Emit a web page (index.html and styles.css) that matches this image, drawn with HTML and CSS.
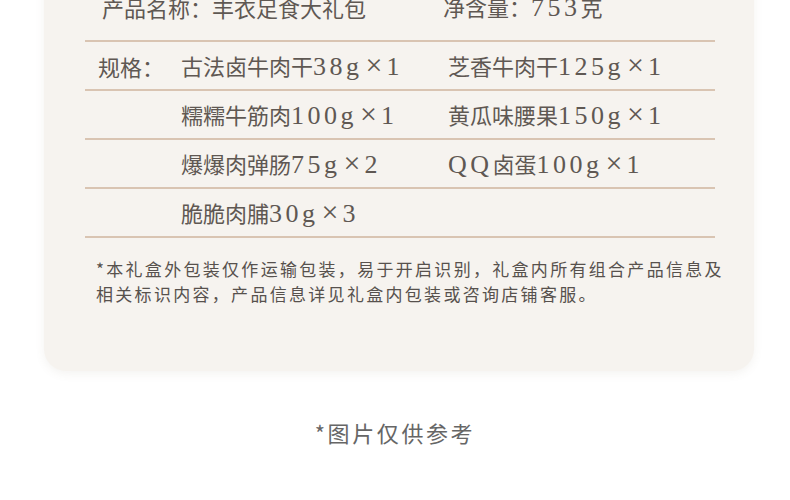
FILE: index.html
```html
<!DOCTYPE html>
<html lang="zh-CN">
<head>
<meta charset="utf-8">
<title>产品信息</title>
<link rel="stylesheet" href="styles.css">
</head>
<body>
<div class="card">
  <div class="row row-head">
    <span class="cell">产品名称：丰衣足食大礼包</span>
    <span class="cell">净含量：<span class="num">753</span>克</span>
  </div>
  <div class="row">
    <span class="label">规格：</span>
    <span class="cell">古法卤牛肉干<span class="num">38g<span class="x">×</span>1</span></span>
    <span class="cell">芝香牛肉干<span class="num">125g<span class="x">×</span>1</span></span>
  </div>
  <div class="row">
    <span class="label"></span>
    <span class="cell">糯糯牛筋肉<span class="num">100g<span class="x">×</span>1</span></span>
    <span class="cell">黄瓜味腰果<span class="num">150g<span class="x">×</span>1</span></span>
  </div>
  <div class="row">
    <span class="label"></span>
    <span class="cell">爆爆肉弹肠<span class="num">75g<span class="x">×</span>2</span></span>
    <span class="cell"><span class="num">QQ</span>卤蛋<span class="num">100g<span class="x">×</span>1</span></span>
  </div>
  <div class="row">
    <span class="label"></span>
    <span class="cell">脆脆肉脯<span class="num">30g<span class="x">×</span>3</span></span>
    <span class="cell"></span>
  </div>
  <p class="note">*本礼盒外包装仅作运输包装，易于开启识别，礼盒内所有组合产品信息及<br>相关标识内容，产品信息详见礼盒内包装或咨询店铺客服。</p>
</div>
<p class="caption">*图片仅供参考</p>
</body>
</html>
```

FILE: styles.css
```css
html, body {
  margin: 0;
  padding: 0;
  background: #ffffff;
}

body {
  width: 790px;
  height: 500px;
  overflow: hidden;
  font-family: "Liberation Serif", "Noto Sans CJK SC", serif;
}

.card {
  margin: 0 36px 0 44px;
  width: 710px;
  box-sizing: border-box;
  padding: 0 39px 65px 41px;
  background: #f6f3ef;
  border-radius: 0 0 22px 22px;
  box-shadow: 0 3px 10px rgba(120, 100, 80, 0.08);
}

.row {
  display: grid;
  grid-template-columns: 83px 267px 1fr;
  align-items: center;
  height: 47px;
  padding-left: 13px;
  border-bottom: 2px solid #d9c4b2;
  color: #5f5853;
  font-size: 22px;
  white-space: nowrap;
}

.row-head {
  grid-template-columns: 341px 1fr;
  padding-left: 17px;
  height: 44px;
  margin-top: -14px;
  padding-bottom: 10px;
}

.row-head .cell {
  padding-top: 0;
  margin-top: -3px;
}

.cell, .label {
  display: block;
  padding-top: 0;
}

.num {
  font-family: "Liberation Serif", serif;
  font-size: 26px;
  letter-spacing: 3.5px;
}

.x {
  font-size: 30px;
  letter-spacing: 4px;
  margin-left: 3px;
  line-height: 1;
}

.note {
  margin: 18px 0 0 11px;
  font-family: "Noto Sans CJK SC", sans-serif;
  font-size: 17px;
  line-height: 25px;
  letter-spacing: 2.3px;
  color: #57514d;
  white-space: nowrap;
}

.caption {
  margin: 46px 0 0;
  text-align: center;
  font-family: "Noto Sans CJK SC", sans-serif;
  font-size: 22px;
  line-height: 30px;
  letter-spacing: 2.6px;
  color: #666666;
}
```
